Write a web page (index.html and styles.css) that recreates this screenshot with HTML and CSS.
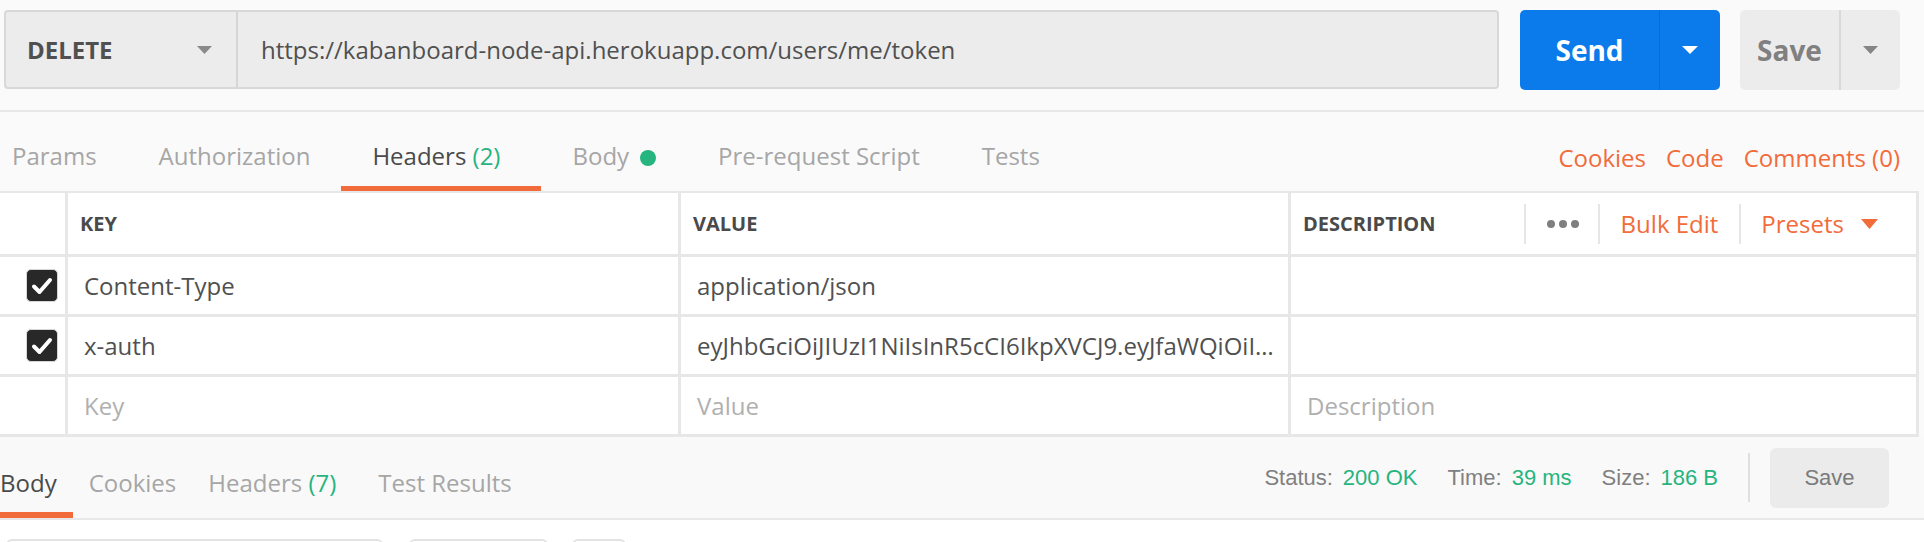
FILE: index.html
```html
<!DOCTYPE html>
<html lang="en">
<head>
<meta charset="utf-8">
<title>Postman request</title>
<link rel="stylesheet" href="styles.css">
</head>
<body>
<div class="app">
  <div class="topbar">
    <div class="url-group">
      <div class="method">
        <span class="method-label">DELETE</span>
        <svg class="caret" width="15" height="8" viewBox="0 0 15 8"><path d="M0 0H15L7.5 8Z" fill="#8a8a8a"/></svg>
      </div>
      <div class="url">https://kabanboard-node-api.herokuapp.com/users/me/token</div>
    </div>
    <div class="btn send">
      <span class="btn-label">Send</span>
      <span class="btn-caret"><svg width="16" height="8" viewBox="0 0 16 8"><path d="M0 0H16L8 8Z" fill="#ffffff"/></svg></span>
    </div>
    <div class="btn save">
      <span class="btn-label">Save</span>
      <span class="btn-caret"><svg width="15" height="8" viewBox="0 0 15 8"><path d="M0 0H15L7.5 8Z" fill="#858585"/></svg></span>
    </div>
  </div>

  <div class="req-tabs">
    <div class="tabs">
      <div class="tab">Params</div>
      <div class="tab">Authorization</div>
      <div class="tab active">Headers <span class="count">(2)</span></div>
      <div class="tab">Body<span class="dot"></span></div>
      <div class="tab">Pre-request Script</div>
      <div class="tab">Tests</div>
    </div>
    <div class="links">
      <span class="link">Cookies</span>
      <span class="link">Code</span>
      <span class="link">Comments (0)</span>
    </div>
  </div>

  <div class="table">
    <div class="cell head"></div>
    <div class="cell head"><span class="th">KEY</span></div>
    <div class="cell head"><span class="th">VALUE</span></div>
    <div class="cell head desc-head">
      <span class="th">DESCRIPTION</span>
      <div class="head-actions">
        <span class="vsep"></span>
        <span class="dots"><i></i><i></i><i></i></span>
        <span class="vsep"></span>
        <span class="orange">Bulk Edit</span>
        <span class="vsep"></span>
        <span class="orange presets">Presets
          <svg width="17" height="10" viewBox="0 0 17 10"><path d="M0 0H17L8.5 10Z" fill="#f26b3a"/></svg>
        </span>
      </div>
    </div>

    <div class="cell check"><span class="checkbox"><svg width="32" height="33" viewBox="0 0 32 33"><path d="M8 17.5L13.5 23L24 11" fill="none" stroke="#fff" stroke-width="4" stroke-linecap="round" stroke-linejoin="round"/></svg></span></div>
    <div class="cell td">Content-Type</div>
    <div class="cell td">application/json</div>
    <div class="cell td"></div>

    <div class="cell check"><span class="checkbox"><svg width="32" height="33" viewBox="0 0 32 33"><path d="M8 17.5L13.5 23L24 11" fill="none" stroke="#fff" stroke-width="4" stroke-linecap="round" stroke-linejoin="round"/></svg></span></div>
    <div class="cell td">x-auth</div>
    <div class="cell td">eyJhbGciOiJIUzI1NiIsInR5cCI6IkpXVCJ9.eyJfaWQiOiI…</div>
    <div class="cell td"></div>

    <div class="cell check"></div>
    <div class="cell td placeholder">Key</div>
    <div class="cell td placeholder">Value</div>
    <div class="cell td placeholder">Description</div>
  </div>

  <div class="res-bar">
    <div class="res-tabs">
      <div class="rtab active">Body</div>
      <div class="rtab">Cookies</div>
      <div class="rtab">Headers <span class="count">(7)</span></div>
      <div class="rtab">Test Results</div>
    </div>
    <div class="res-meta">
      <span class="meta-label">Status:</span><span class="meta-val">200 OK</span>
      <span class="meta-label gap">Time:</span><span class="meta-val">39 ms</span>
      <span class="meta-label gap">Size:</span><span class="meta-val">186 B</span>
      <span class="meta-sep"></span>
      <span class="res-save">Save</span>
    </div>
  </div>

  <div class="res-toolbar">
    <span class="tbox w1"></span>
    <span class="tbox w2"></span>
    <span class="tbox w3"></span>
  </div>
</div>
</body>
</html>
```

FILE: styles.css
```css
html, body {
  margin: 0;
  padding: 0;
}
body {
  background: #fafafa;
  font-family: "Open Sans", "Noto Sans", sans-serif;
  color: #505050;
  width: 1924px;
  height: 542px;
  overflow: hidden;
}
.app {
  width: 1924px;
}

/* top bar */
.topbar {
  display: flex;
  align-items: flex-start;
  height: 112px;
  box-sizing: border-box;
  padding: 10px 0 0 4px;
  border-bottom: 2px solid #e8e8e8;
}
.url-group {
  display: flex;
  width: 1495px;
  height: 79px;
  box-sizing: border-box;
  background: #ececec;
  border: 2px solid #d8d8d8;
  border-radius: 4px;
}
.method {
  display: flex;
  align-items: center;
  justify-content: space-between;
  width: 232px;
  flex: none;
  box-sizing: border-box;
  padding: 0 24px 0 21px;
  border-right: 2px solid #d6d6d6;
}
.method-label {
  font-weight: 700;
  font-size: 24px;
  color: #505050;
}
.url {
  display: flex;
  align-items: center;
  padding-left: 23px;
  font-size: 24px;
  color: #505050;
  white-space: nowrap;
}
.btn {
  display: flex;
  height: 80px;
  border-radius: 5px;
  font-weight: 700;
  font-size: 28px;
}
.btn-label, .btn-caret {
  display: flex;
  align-items: center;
  justify-content: center;
}
.send {
  margin-left: 21px;
  width: 200px;
  background: #0b7bec;
  color: #ffffff;
}
.send .btn-label {
  width: 139px;
  border-right: 1px solid #0a6bd0;
}
.send .btn-caret {
  width: 60px;
}
.save {
  margin-left: 20px;
  width: 160px;
  background: #ececec;
  color: #808080;
}
.save .btn-label {
  width: 99px;
  border-right: 2px solid #d9d9d9;
}
.save .btn-caret {
  width: 59px;
}

/* request tabs */
.req-tabs {
  display: flex;
  justify-content: space-between;
  height: 79px;
  padding-right: 24px;
}
.tabs {
  display: flex;
  margin-left: -19px;
}
.tab {
  display: flex;
  align-items: flex-start;
  height: 79px;
  box-sizing: border-box;
  padding: 28px 31px 0;
  border-bottom: 5px solid transparent;
  font-size: 24px;
  line-height: 32px;
  color: #a6a6a6;
  white-space: pre;
}
.tab.active {
  color: #4a4a4a;
  border-bottom-color: #f26b3a;
}
.count {
  color: #26b47f;
  margin-right: 10px;
}
.dot {
  display: inline-block;
  width: 16px;
  height: 16px;
  border-radius: 50%;
  background: #26b47f;
  margin: 10px 0 0 11px;
}
.links {
  display: flex;
  gap: 20px;
  padding-top: 30px;
  font-size: 24px;
  line-height: 32px;
  color: #f26b3a;
}

/* headers table */
.table {
  display: grid;
  grid-template-columns: 65px 610px 607px 625px;
  grid-template-rows: 61px 57px 57px 57px;
  gap: 3px;
  width: 1919px;
  box-sizing: border-box;
  padding: 2px 3px 3px 0;
  background: #e7e7e7;
}
.cell {
  background: #ffffff;
  display: flex;
  align-items: center;
  min-width: 0;
}
.head {
  padding-left: 12px;
}
.th {
  font-weight: 700;
  font-size: 20px;
  color: #4a4a4a;
}
.desc-head {
  justify-content: space-between;
  padding-right: 38px;
}
.head-actions {
  display: flex;
  align-items: center;
}
.vsep {
  width: 2px;
  height: 40px;
  background: #e6e6e6;
}
.dots {
  display: flex;
  gap: 4px;
  margin: 0 19px 0 21px;
}
.dots i {
  width: 8px;
  height: 8px;
  border-radius: 50%;
  background: #7f7f7f;
}
.orange {
  color: #f26b3a;
  font-size: 24px;
  margin: 0 21px;
}
.presets {
  display: flex;
  align-items: center;
  gap: 17px;
  margin-right: 0;
  margin-left: 20px;
}
.check {
  justify-content: flex-end;
  padding-right: 7px;
}
.checkbox {
  display: flex;
  width: 32px;
  height: 33px;
  box-sizing: border-box;
  background: #282828;
  border: 1px solid #d6d6d6;
  border-radius: 5px;
  align-items: center;
  justify-content: center;
}
.checkbox svg {
  flex: none;
}
.td {
  padding: 0 16px 0 16px;
  font-size: 24px;
  color: #505050;
  white-space: nowrap;
  overflow: hidden;
}
.placeholder {
  color: #b0b0b0;
}

/* response bar */
.res-bar {
  display: flex;
  justify-content: space-between;
  align-items: center;
  height: 83px;
  box-sizing: border-box;
  background: #f9f9f9;
  border-bottom: 2px solid #e8e8e8;
  padding-right: 35px;
}
.res-tabs {
  display: flex;
  align-self: flex-start;
  margin-left: -16px;
}
.rtab {
  height: 81px;
  box-sizing: border-box;
  padding: 30px 16px 0;
  border-bottom: 6px solid transparent;
  font-size: 24px;
  line-height: 32px;
  color: #a6a6a6;
  white-space: pre;
}
.rtab.active {
  color: #4a4a4a;
  border-bottom-color: #f26b3a;
}
.res-meta {
  display: flex;
  align-items: center;
  font-family: "Liberation Sans", Arial, sans-serif;
  font-size: 22px;
}
.meta-label {
  color: #808080;
}
.meta-label.gap {
  margin-left: 30px;
}
.meta-val {
  color: #26b47f;
  margin-left: 10px;
}
.meta-sep {
  width: 2px;
  height: 49px;
  background: #e0e0e0;
  margin: 0 20px 0 30px;
}
.res-save {
  display: flex;
  align-items: center;
  justify-content: center;
  width: 119px;
  height: 60px;
  border-radius: 6px;
  background: #ebebeb;
  color: #7a7a7a;
  font-size: 22px;
}

/* response toolbar (mostly below the fold) */
.res-toolbar {
  display: flex;
  background: #ffffff;
  height: 40px;
  padding: 19px 0 0 6px;
  gap: 26px;
}
.tbox {
  height: 60px;
  box-sizing: border-box;
  border: 2px solid #e3e3e3;
  border-radius: 6px;
}
.w1 { width: 377px; }
.w2 { width: 139px; }
.w3 { width: 54px; margin-left: -2px; }
```
